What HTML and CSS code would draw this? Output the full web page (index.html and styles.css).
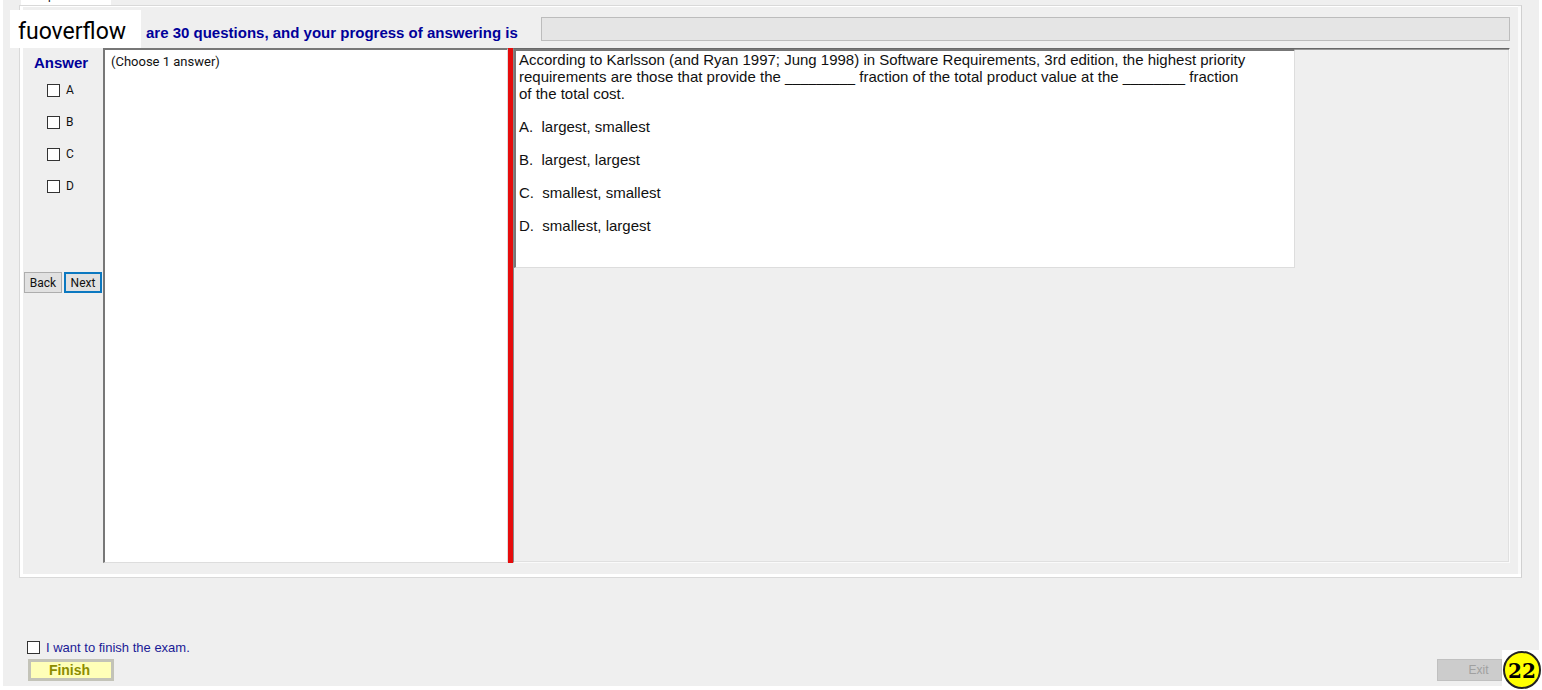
FILE: index.html
```html
<!DOCTYPE html>
<html lang="en">
<head>
  <meta charset="UTF-8" />
  <meta name="viewport" content="width=device-width, initial-scale=1" />
  <title>Exam</title>
  <link rel="stylesheet" href="styles.css">
</head>
<body>

  <main class="window">
    <div class="tab"><span>p</span></div>

    <!-- Exam tab page -->
    <section class="panel">
      <header class="topbar">
        <div class="brand">fuoverflow</div>
        <span class="progress-label" id="progress-label">are 30 questions, and your progress of answering is</span>
        <div class="progress" role="progressbar" aria-labelledby="progress-label"></div>
      </header>

      <div class="content">
        <aside class="answers">
          <h2>Answer</h2>
          <label><input type="checkbox" name="answer"> A</label>
          <label><input type="checkbox" name="answer"> B</label>
          <label><input type="checkbox" name="answer"> C</label>
          <label><input type="checkbox" name="answer"> D</label>
          <div class="nav-buttons">
            <button type="button">Back</button>
            <button type="button" class="active">Next</button>
          </div>
        </aside>

        <div class="hint">(Choose 1 answer)</div>
        <div class="splitter"></div>

        <div class="viewer">
          <article class="question">
            <p>According to Karlsson (and Ryan 1997; Jung 1998) in Software Requirements, 3rd edition, the highest priority<br>requirements are those that provide the <span class="blank">_________</span> fraction of the total product value at the <span class="blank">________</span> fraction<br>of the total cost.</p>
            <p>A.&nbsp; largest, smallest</p>
            <p>B.&nbsp; largest, largest</p>
            <p>C.&nbsp; smallest, smallest</p>
            <p>D.&nbsp; smallest, largest</p>
          </article>
        </div>
      </div>
    </section>

    <footer class="bottom">
      <div class="finish">
        <label><input type="checkbox" name="finish"> I want to finish the exam.</label>
        <button type="button" class="finish-btn" disabled>Finish</button>
      </div>
      <button type="button" class="exit-btn" disabled>Exit</button>
    </footer>
  </main>

  <div class="badge"><span>22</span></div>

</body>
</html>
```
FILE: styles.css
```css
/* === Global Styles === */
* {
  box-sizing: border-box;
}

body {
  margin: 0;
  background: #fff;
  font-family: "Liberation Sans", Arial, sans-serif;
  font-size: 13px;
  color: #111;
}

button {
  font-family: inherit;
  padding: 0;
}

.window {
  display: flex;
  flex-direction: column;
  min-height: calc(100vh - 4px);
  margin: 0 3px;
  padding: 0 17px 5px 16px;
  background: #efefef;
}

/* only the lower edge of the tab shows */
.tab {
  width: 90px;
  height: 5px;
  margin-left: 2px;
  padding-left: 27px;
  overflow: hidden;
  background: #fff;
  font-size: 12px;
  line-height: 16px;
}

.tab span {
  display: block;
  margin-top: -13px;
}

/* === Tab Page === */
.panel {
  flex: 1;
  display: flex;
  flex-direction: column;
  padding: 0 11px 14px 0;
  border: 1px solid #d9d9d9;
  border-right-color: #d0d0d0;
  box-shadow: inset 0 -3px #fff, inset 3px 0 #fff, inset -3px 0 #fafafa, inset 0 1px #fff;
}

.topbar {
  position: relative;
  display: flex;
  align-items: center;
  gap: 23px;
  height: 42px;
  padding: 4px 0 0 126px;
}

/* name plate laid over the corner of the page */
.brand {
  position: absolute;
  top: 4px;
  left: -10px;
  width: 131px;
  height: 38px;
  padding-left: 8px;
  background: #fff;
  font-family: Roboto, sans-serif;
  font-size: 23px;
  line-height: 44px;
  color: #000;
  z-index: 1;
}

.progress-label {
  color: #00009a;
  font-size: 15px;
  font-weight: bold;
  white-space: nowrap;
  padding-top: 6px;
}

.progress {
  flex: 1;
  height: 24px;
  background: #e5e5e5;
  border: 1px solid #bcbcbc;
}

/* === Answer Column === */
.content {
  flex: 1;
  display: flex;
}

.answers {
  width: 83px;
  padding: 6px 0 0 4px;
}

.answers h2 {
  margin: 0 0 10px;
  padding-left: 10px;
  color: #00009a;
  font-size: 15px;
  line-height: 18px;
}

label {
  display: flex;
  align-items: center;
  gap: 6px;
}

.answers label {
  height: 16px;
  margin: 0 0 16px 23px;
  font-family: Roboto, sans-serif;
  font-size: 12px;
}

input[type="checkbox"] {
  appearance: none;
  width: 13px;
  height: 13px;
  margin: 0;
  border: 1px solid #333;
  background: #fff;
}

.nav-buttons {
  display: flex;
  gap: 2px;
  margin-top: 78px;
}

.nav-buttons button {
  width: 38px;
  height: 21px;
  border: 1px solid #adadad;
  background: #e1e1e1;
  font-family: Roboto, sans-serif;
  font-size: 12px;
  color: #111;
}

.nav-buttons .active {
  border: 2px solid #0b78c0;
}

/* === Split View === */
.hint {
  width: 405px;
  padding: 4px 6px;
  background: #fff;
  border: 1px solid #ddd;
  border-top: 2px solid #777;
  border-left: 2px solid #777;
  font-family: Roboto, sans-serif;
  line-height: 16px;
}

.splitter {
  width: 5px;
  background: #e60c0c;
}

.viewer {
  flex: 1;
  border: 1px solid #fafafa;
  border-top: 1px solid #696969;
  border-left: 1px solid #888;
  box-shadow: inset 0 1px #999, inset -1px -1px #e0e0e0;
}

.question {
  max-width: 781px;
  min-height: 219px;
  padding: 0 3px;
  background: #fff;
  border: 1px solid #ddd;
  border-top: 2px solid #777;
  border-left: 2px solid #777;
  font-size: 15px;
  line-height: 17px;
}

.question p {
  margin: 0 0 16px;
}

.blank {
  font-size: 14px;
  line-height: 1;
}

/* === Bottom Row === */
.bottom {
  display: flex;
  justify-content: space-between;
  align-items: flex-end;
  padding: 61px 20px 0 8px;
}

.finish label {
  height: 16px;
  margin-bottom: 4px;
  color: #1a1a96;
}

.finish-btn {
  display: block;
  width: 86px;
  height: 22px;
  margin-left: 1px;
  padding-right: 3px;
  border: 3px solid #c3c3b8;
  background: #ffffb8;
  color: #8c8c00;
  font-size: 14px;
  font-weight: bold;
}

.exit-btn {
  width: 65px;
  height: 22px;
  padding-left: 18px;
  border: 1px solid #c0c0c0;
  background: #ccc;
  color: #a0a0a0;
  font-size: 12px;
}

/* question number stamped over the corner */
.badge {
  position: absolute;
  right: 0;
  bottom: 0;
  width: 40px;
  height: 40px;
  padding: 1px;
  background: #fff;
}

.badge span {
  display: block;
  width: 38px;
  height: 38px;
  border: 2px solid #222;
  border-radius: 50%;
  background: #ff0;
  color: #000;
  font-family: "DejaVu Serif", serif;
  font-size: 20px;
  font-weight: bold;
  line-height: 36px;
  text-align: center;
}
```
